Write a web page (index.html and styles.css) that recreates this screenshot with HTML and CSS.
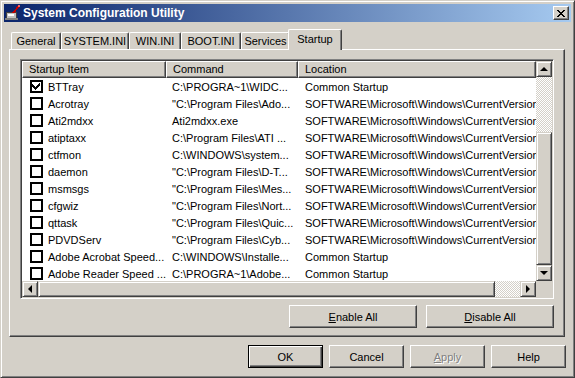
FILE: index.html
```html
<!DOCTYPE html>
<html lang="en">
  <head>
    <meta charset="UTF-8" />
    <title>System Configuration Utility</title>
    <link rel="stylesheet" href="styles.css">
  </head>
  <body>
    <div class="window">
      <div class="titlebar">
        <svg class="app-icon" viewBox="0 0 16 16" shape-rendering="crispEdges">
          <rect x="1" y="7" width="10" height="6" fill="#c0c0c0" stroke="#404040" />
          <rect x="3" y="9" width="6" height="2" fill="#fff" />
          <rect x="0" y="13" width="13" height="2" fill="#808080" />
          <path d="M8 8 L14 1" stroke="#c00000" stroke-width="2" />
          <rect x="13" y="0" width="2" height="2" fill="#ff6060" />
        </svg>
        <span class="title">System Configuration Utility</span>
        <button class="close">
          <svg viewBox="0 0 8 7" width="8" height="7" shape-rendering="crispEdges">
            <path d="M0 0h2v1h1v1h2V1h1V0h2v1H7v1H6v1H5v1h1v1h1v1h1v1H6V6H5V5H3v1H2v1H0V6h1V5h1V4h1V3H2V2H1V1H0z" fill="#000" />
          </svg>
        </button>
      </div>

      <div class="client">
        <div class="tabs">
          <div class="tab tab-general">General</div>
          <div class="tab tab-system">SYSTEM.INI</div>
          <div class="tab tab-win">WIN.INI</div>
          <div class="tab tab-boot">BOOT.INI</div>
          <div class="tab tab-services">Services</div>
          <div class="tab tab-startup active">Startup</div>
        </div>

        <div class="panel">
          <div class="listview">
            <div class="lv-body">
              <div class="lv-header">
                <div class="hcell">Startup Item</div>
                <div class="hcell">Command</div>
                <div class="hcell">Location</div>
              </div>
              <div class="row">
                <div class="cell item"><span class="check on"></span>BTTray</div>
                <div class="cell">C:\PROGRA~1\WIDC...</div>
                <div class="cell loc">Common Startup</div>
              </div>
              <div class="row">
                <div class="cell item"><span class="check"></span>Acrotray</div>
                <div class="cell">"C:\Program Files\Ado...</div>
                <div class="cell loc">SOFTWARE\Microsoft\Windows\CurrentVersion\Run</div>
              </div>
              <div class="row">
                <div class="cell item"><span class="check"></span>Ati2mdxx</div>
                <div class="cell">Ati2mdxx.exe</div>
                <div class="cell loc">SOFTWARE\Microsoft\Windows\CurrentVersion\Run</div>
              </div>
              <div class="row">
                <div class="cell item"><span class="check"></span>atiptaxx</div>
                <div class="cell">C:\Program Files\ATI ...</div>
                <div class="cell loc">SOFTWARE\Microsoft\Windows\CurrentVersion\Run</div>
              </div>
              <div class="row">
                <div class="cell item"><span class="check"></span>ctfmon</div>
                <div class="cell">C:\WINDOWS\system...</div>
                <div class="cell loc">SOFTWARE\Microsoft\Windows\CurrentVersion\Run</div>
              </div>
              <div class="row">
                <div class="cell item"><span class="check"></span>daemon</div>
                <div class="cell">"C:\Program Files\D-T...</div>
                <div class="cell loc">SOFTWARE\Microsoft\Windows\CurrentVersion\Run</div>
              </div>
              <div class="row">
                <div class="cell item"><span class="check"></span>msmsgs</div>
                <div class="cell">"C:\Program Files\Mes...</div>
                <div class="cell loc">SOFTWARE\Microsoft\Windows\CurrentVersion\Run</div>
              </div>
              <div class="row">
                <div class="cell item"><span class="check"></span>cfgwiz</div>
                <div class="cell">"C:\Program Files\Nort...</div>
                <div class="cell loc">SOFTWARE\Microsoft\Windows\CurrentVersion\Run</div>
              </div>
              <div class="row">
                <div class="cell item"><span class="check"></span>qttask</div>
                <div class="cell">"C:\Program Files\Quic...</div>
                <div class="cell loc">SOFTWARE\Microsoft\Windows\CurrentVersion\Run</div>
              </div>
              <div class="row">
                <div class="cell item"><span class="check"></span>PDVDServ</div>
                <div class="cell">"C:\Program Files\Cyb...</div>
                <div class="cell loc">SOFTWARE\Microsoft\Windows\CurrentVersion\Run</div>
              </div>
              <div class="row">
                <div class="cell item"><span class="check"></span>Adobe Acrobat Speed...</div>
                <div class="cell">C:\WINDOWS\Installe...</div>
                <div class="cell loc">Common Startup</div>
              </div>
              <div class="row">
                <div class="cell item"><span class="check"></span>Adobe Reader Speed ...</div>
                <div class="cell">C:\PROGRA~1\Adobe...</div>
                <div class="cell loc">Common Startup</div>
              </div>
            </div>

            <div class="vscroll">
              <div class="sbtn"><span class="arrow up"></span></div>
              <div class="track v-top"></div>
              <div class="thumb v-thumb"></div>
              <div class="sbtn"><span class="arrow down"></span></div>
            </div>
            <div class="hscroll">
              <div class="sbtn"><span class="arrow left"></span></div>
              <div class="thumb h-thumb"></div>
              <div class="track h-rest"></div>
              <div class="sbtn"><span class="arrow right"></span></div>
            </div>
            <div class="corner"></div>
          </div>

          <div class="panel-buttons">
            <button class="btn wide"><u>E</u>nable All</button>
            <button class="btn wide"><u>D</u>isable All</button>
          </div>
        </div>

        <div class="dialog-buttons">
          <button class="btn default">OK</button>
          <button class="btn">Cancel</button>
          <button class="btn disabled"><u>A</u>pply</button>
          <button class="btn">Help</button>
        </div>
      </div>
    </div>
  </body>
</html>
```

FILE: styles.css
```css
* {
  box-sizing: border-box;
}
body {
  margin: 0;
  background: #d4d0c8;
  font-family: "Liberation Sans", Arial, sans-serif;
  font-size: 11px;
  color: #000;
}
.window {
  width: 575px;
  height: 378px;
  padding: 3px;
  display: flex;
  flex-direction: column;
  border: 1px solid;
  border-color: #d4d0c8 #404040 #404040 #d4d0c8;
  box-shadow: inset 1px 1px #fff, inset -1px -1px #808080;
}
.titlebar {
  height: 18px;
  display: flex;
  align-items: center;
  padding: 0 2px 0 1px;
  background: linear-gradient(to right, #0a246a, #a6caf0);
  color: #fff;
  font-weight: bold;
}
.app-icon {
  width: 16px;
  height: 16px;
  margin-right: 2px;
}
.title {
  flex: 1;
  font-size: 12px;
}
.close {
  width: 16px;
  height: 14px;
  padding: 0;
  display: flex;
  align-items: center;
  justify-content: center;
  background: #d4d0c8;
  border: 1px solid;
  border-color: #fff #404040 #404040 #fff;
  box-shadow: inset -1px -1px #808080;
}

.client {
  flex: 1;
  padding: 7px 6px 0 5px;
  display: flex;
  flex-direction: column;
}
.tabs {
  display: flex;
  align-items: flex-end;
  padding-left: 2px;
  margin-bottom: -1px;
  height: 21px;
}
.tab {
  flex: none;
  height: 17px;
  margin-bottom: 1px;
  line-height: 16px;
  text-align: center;
  white-space: nowrap;
  border: 1px solid;
  border-bottom: none;
  border-color: #fff #404040 #404040 #fff;
  border-radius: 2px 2px 0 0;
  box-shadow: inset -1px 0 #808080;
}
.tab-general { width: 50px; }
.tab-system { width: 68px; }
.tab-win { width: 52px; }
.tab-boot { width: 60px; }
.tab-services { width: 49px; }
.tab-startup { width: 54px; }
.tab.active {
  position: relative;
  z-index: 1;
  height: 21px;
  margin: 0 -2px;
  line-height: 18px;
  background: #d4d0c8;
}

.panel {
  height: 288px;
  padding: 9px 10px 0 10px;
  border: 1px solid;
  border-color: #fff #404040 #404040 #fff;
  box-shadow: inset -1px -1px #808080;
}
.listview {
  width: 534px;
  height: 240px;
  display: grid;
  grid-template-columns: 1fr 16px;
  grid-template-rows: 1fr 16px;
  background: #fff;
  border: 1px solid;
  border-color: #808080 #fff #fff #808080;
  box-shadow: inset 1px 1px #404040, inset -1px -1px #d4d0c8;
  padding: 1px;
}
.lv-body {
  overflow: hidden;
}
.lv-header,
.row {
  display: grid;
  grid-template-columns: 144px 132px 1fr;
}
.hcell {
  height: 17px;
  padding-left: 6px;
  line-height: 15px;
  background: #d4d0c8;
  border: 1px solid;
  border-color: #fff #404040 #404040 #fff;
  box-shadow: inset -1px -1px #808080;
  white-space: nowrap;
  overflow: hidden;
}
.row {
  height: 17px;
}
.cell {
  display: flex;
  align-items: center;
  padding-left: 6px;
  white-space: nowrap;
  overflow: hidden;
}
.cell.item {
  padding-left: 8px;
}
.cell.loc {
  padding-left: 7px;
}
.check {
  flex: none;
  width: 13px;
  height: 13px;
  margin-right: 5px;
  border: 2px solid #000;
  background: #fff;
}
.check.on {
  background: url("data:image/svg+xml;utf8,<svg xmlns='http://www.w3.org/2000/svg' width='9' height='9' shape-rendering='crispEdges'><path d='M7 1h1v3H7v1H6v1H5v1H4v1H3V7H2V6H1V5H0V2h1v1h1v1h1v1h1V4h1V3h1V2h1z' fill='%23000'/></svg>") center / 9px 9px no-repeat #fff;
}

.vscroll {
  display: flex;
  flex-direction: column;
}
.hscroll {
  display: flex;
}
.sbtn,
.thumb {
  flex: none;
  width: 16px;
  height: 16px;
  display: flex;
  align-items: center;
  justify-content: center;
  background: #d4d0c8;
  border: 1px solid;
  border-color: #d4d0c8 #404040 #404040 #d4d0c8;
  box-shadow: inset 1px 1px #fff, inset -1px -1px #808080;
}
.track {
  background: repeating-conic-gradient(#fff 0 25%, #d4d0c8 0 50%) 0 0 / 2px 2px;
}
.v-top {
  height: 55px;
}
.v-thumb {
  height: auto;
  flex: 1;
}
.h-thumb {
  width: 457px;
}
.h-rest {
  flex: 1;
}
.corner {
  background: #d4d0c8;
}
.arrow {
  width: 0;
  height: 0;
  border: 4px solid transparent;
}
.arrow.up {
  border-bottom-color: #000;
  border-top-width: 0;
  margin-top: -1px;
}
.arrow.down {
  border-top-color: #000;
  border-bottom-width: 0;
}
.arrow.left {
  border-right-color: #000;
  border-left-width: 0;
  margin-left: -1px;
}
.arrow.right {
  border-left-color: #000;
  border-right-width: 0;
}

.btn {
  width: 75px;
  height: 23px;
  padding: 0;
  font-family: inherit;
  font-size: 11px;
  color: #000;
  background: #d4d0c8;
  border: 1px solid;
  border-color: #fff #404040 #404040 #fff;
  box-shadow: inset -1px -1px #808080;
}
.btn.wide {
  width: 128px;
}
.btn.default {
  border-color: #000;
  box-shadow: inset 1px 1px #fff, inset -1px -1px #404040, inset -2px -2px #808080;
}
.btn.disabled {
  color: #808080;
  text-shadow: 1px 1px #fff;
}
.panel-buttons {
  display: flex;
  justify-content: flex-end;
  gap: 9px;
  width: 534px;
  margin-top: 6px;
}
.dialog-buttons {
  display: flex;
  justify-content: flex-end;
  gap: 6px;
  margin-top: 8px;
  margin-right: -1px;
}
```
